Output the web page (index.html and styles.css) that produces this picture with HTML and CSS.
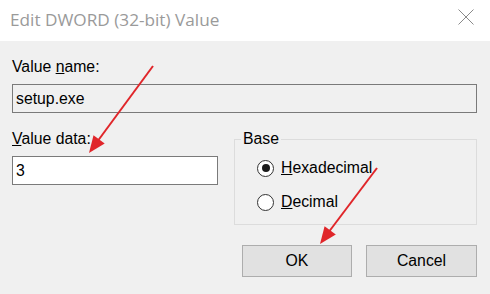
FILE: index.html
```html
<!DOCTYPE html>
<html>
<head>
<meta charset="utf-8">
<link rel="stylesheet" href="styles.css">
</head>
<body>
<div class="dialog">
  <div class="titlebar">
    <span class="title">Edit DWORD (32-bit) Value</span>
    <svg class="close" width="16" height="16" viewBox="0 0 16 16"><path d="M0.5 0.5 L15.5 15.5 M15.5 0.5 L0.5 15.5" stroke="#8a8a8a" stroke-width="1" fill="none"/></svg>
  </div>
  <div class="content">
    <div class="label name-label">Value <u>n</u>ame:</div>
    <div class="field readonly">setup.exe</div>
    <div class="row">
      <div class="left">
        <div class="label"><u>V</u>alue data:</div>
        <div class="field data">3</div>
      </div>
      <fieldset class="group">
        <legend>Base</legend>
        <div class="radio"><span class="dot checked"></span><span><u>H</u>exadecimal</span></div>
        <div class="radio"><span class="dot"></span><span><u>D</u>ecimal</span></div>
      </fieldset>
    </div>
    <div class="buttons">
      <div class="btn ok">OK</div>
      <div class="btn cancel">Cancel</div>
    </div>
  </div>
  <svg class="arrows" width="490" height="294" viewBox="0 0 490 294">
    <line x1="153" y1="66" x2="97" y2="142" stroke="#e0262a" stroke-width="2"/>
    <polygon points="89,153 104.7,143.5 93.5,135.2" fill="#e0262a"/>
    <line x1="377" y1="168" x2="328" y2="233" stroke="#e0262a" stroke-width="2"/>
    <polygon points="320,244 335.8,234.6 324.6,226.2" fill="#e0262a"/>
  </svg>
</div>
</body>
</html>
```
FILE: styles.css
```css
html, body {
  margin: 0;
  padding: 0;
}
body {
  background: #f0f0f0;
  font-family: "Liberation Sans", Arial, sans-serif;
  font-size: 15.8px;
  color: #000;
}
.dialog {
  position: relative;
  width: 490px;
  height: 294px;
  overflow: hidden;
}
.titlebar {
  height: 41px;
  background: #fff;
  display: flex;
  align-items: center;
  justify-content: space-between;
  padding: 0 16px 0 10px;
  box-sizing: border-box;
}
.title {
  font-family: "Open Sans", "Noto Sans", sans-serif;
  font-size: 17.2px;
  color: #9a9a9a;
  margin-top: -2px;
}
.close {
  display: block;
  margin-top: -7px;
}
.content {
  padding: 0 13px 0 12px;
}
.label {
  line-height: 18px;
}
.name-label {
  margin-top: 17px;
  margin-bottom: 8px;
}
.field {
  height: 29px;
  box-sizing: border-box;
  border: 1px solid #7a7a7a;
  padding: 0 3px;
  line-height: 27px;
}
.readonly {
  background: #f0f0f0;
}
.row {
  display: flex;
  gap: 16px;
  margin-top: 17px;
}
.left {
  width: 206px;
}
.left .label {
  margin-bottom: 8px;
}
.data {
  background: #fff;
}
.group {
  flex: 1;
  margin: 0;
  padding: 3px 0 0 22px;
  border: 1px solid #dcdcdc;
  height: 95px;
  box-sizing: border-box;
  min-width: 0;
}
.group legend {
  padding: 0 2px;
  margin-left: -16px;
  line-height: 18px;
}
.radio {
  display: flex;
  align-items: center;
  gap: 7px;
  height: 34px;
}
.dot {
  width: 17px;
  height: 17px;
  box-sizing: border-box;
  border: 1px solid #333;
  border-radius: 50%;
  background: #fff;
  position: relative;
}
.dot.checked::after {
  content: "";
  position: absolute;
  left: 3.5px;
  top: 3.5px;
  width: 8px;
  height: 8px;
  border-radius: 50%;
  background: #1a1a1a;
}
.buttons {
  display: flex;
  justify-content: flex-end;
  gap: 14px;
  margin-top: 20px;
}
.btn {
  height: 32px;
  box-sizing: border-box;
  border: 1px solid #adadad;
  background: #e1e1e1;
  display: flex;
  align-items: center;
  justify-content: center;
}
.ok {
  width: 110px;
}
.cancel {
  width: 111px;
}
.arrows {
  position: absolute;
  left: 0;
  top: 0;
  pointer-events: none;
}
```
